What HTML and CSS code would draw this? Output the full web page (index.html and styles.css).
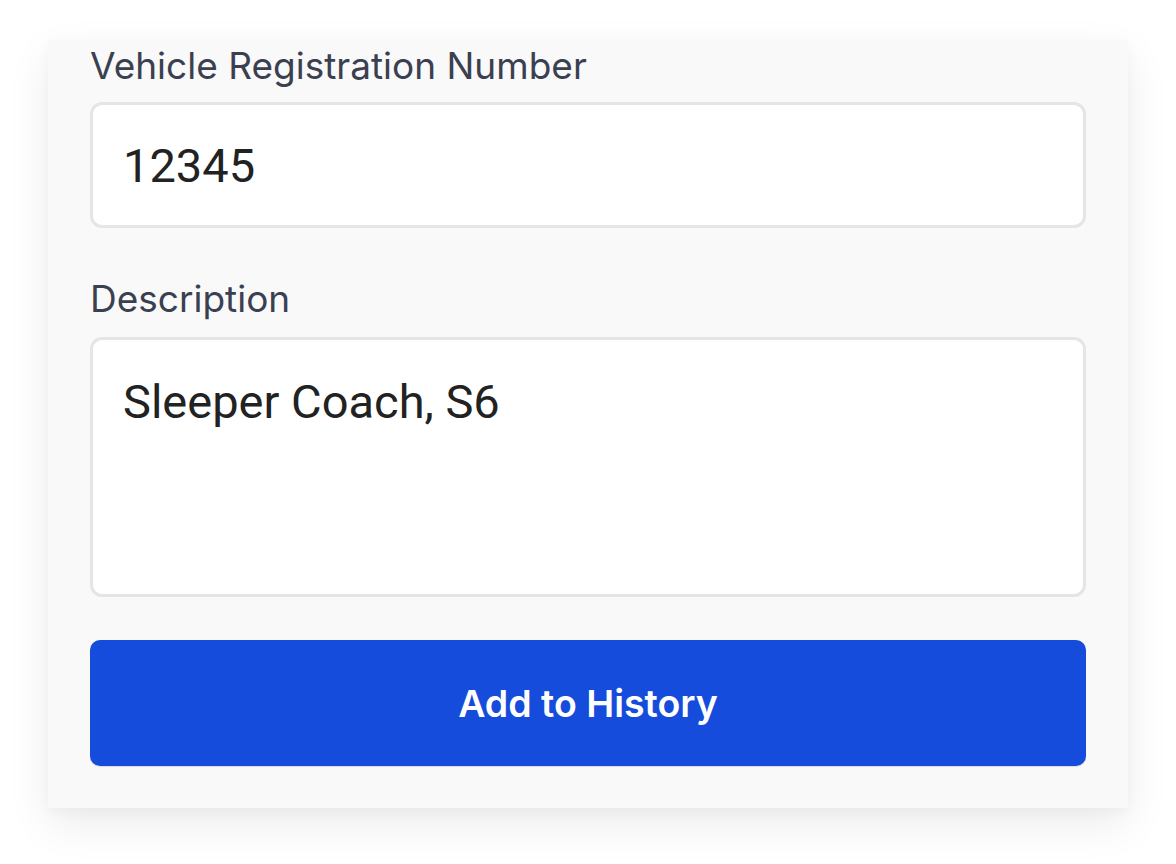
FILE: index.html
```html
<!DOCTYPE html>
<html lang="en">
<head>
<meta charset="utf-8">
<title>Add Vehicle History</title>
<link rel="stylesheet" href="styles.css">
</head>
<body>
<div class="card">
  <form class="form">
    <div class="field">
      <label class="label" for="reg">Vehicle Registration Number</label>
      <input class="input" id="reg" type="text" value="12345">
    </div>
    <div class="field">
      <label class="label" for="desc">Description</label>
      <textarea class="textarea" id="desc">Sleeper Coach, S6</textarea>
    </div>
    <button class="button" type="button">Add to History</button>
  </form>
</div>
</body>
</html>
```
FILE: styles.css
```css
html, body {
  margin: 0;
  padding: 0;
  background: #ffffff;
}
body {
  padding: 40px 48px 60px 48px;
  font-family: "Inter", "Liberation Sans", sans-serif;
}
.card {
  width: 1080px;
  height: 768px;
  box-sizing: border-box;
  background: #f9f9fa;
  padding: 4px 42px 42px 42px;
  box-shadow: 0 16px 40px rgba(0, 0, 0, 0.08), 0 4px 12px rgba(0, 0, 0, 0.03);
}
.form {
  display: flex;
  flex-direction: column;
}
.field {
  display: flex;
  flex-direction: column;
  gap: 14px;
}
.field + .field {
  margin-top: 49px;
}
.label {
  font-family: "Inter", sans-serif;
  font-size: 37px;
  line-height: 44px;
  color: #3a4050;
}
.field + .field .label {
  margin-bottom: 2px;
}
.input, .textarea {
  display: block;
  width: 100%;
  box-sizing: border-box;
  margin: 0;
  border: 3px solid #e5e5e6;
  border-radius: 12px;
  background: #ffffff;
  font-family: "Roboto", sans-serif;
  font-size: 47px;
  color: #222222;
  outline: none;
}
.input {
  height: 126px;
  padding: 0 30px;
}
.textarea {
  height: 260px;
  padding: 34px 30px;
  resize: none;
  line-height: 56px;
  overflow: hidden;
}
.button {
  margin-top: 43px;
  height: 126px;
  width: 100%;
  border: none;
  border-radius: 10px;
  background: #154cdb;
  color: #ffffff;
  font-family: "Inter", sans-serif;
  font-weight: 600;
  font-size: 37.5px;
  cursor: pointer;
  box-shadow: 0 1px 1px rgba(0, 0, 0, 0.12);
}
```
